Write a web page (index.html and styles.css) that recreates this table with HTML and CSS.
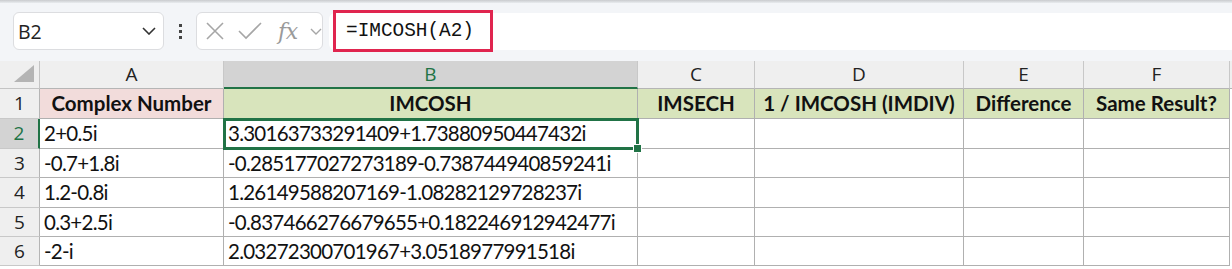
FILE: index.html
```html
<!DOCTYPE html>
<html>
<head>
<meta charset="utf-8">
<link rel="stylesheet" href="styles.css">
</head>
<body>
<div class="topline"></div>
<div class="toolbar">
  <div class="namebox">
    <span class="nb-text">B2</span>
    <svg class="chev" width="14" height="8" viewBox="0 0 14 8"><path d="M1 1 L7 7 L13 1" fill="none" stroke="#333" stroke-width="1.6"/></svg>
  </div>
  <div class="dots"><span></span><span></span><span></span></div>
  <div class="fxbox">
    <svg width="20" height="20" viewBox="0 0 20 20"><path d="M2 2 L18 18 M18 2 L2 18" stroke="#a6a6a6" stroke-width="1.6" fill="none"/></svg>
    <svg width="26" height="20" viewBox="0 0 26 20"><path d="M2 10 L9 17 L24 2" stroke="#a6a6a6" stroke-width="1.6" fill="none"/></svg>
    <span class="fx">fx</span>
    <svg width="12" height="7" viewBox="0 0 12 7"><path d="M1 1 L6 6 L11 1" fill="none" stroke="#a6a6a6" stroke-width="1.4"/></svg>
  </div>
  <div class="formulabar">
    <div class="highlight"><span class="formula">=IMCOSH(A2)</span></div>
  </div>
</div>
<div class="sheet">
  <div class="corner"><svg width="20" height="17" viewBox="0 0 20 17"><path d="M20 0 L20 17 L0 17 Z" fill="#b4b4b4"/></svg></div>
  <div class="ch">A</div>
  <div class="ch sel">B</div>
  <div class="ch">C</div>
  <div class="ch">D</div>
  <div class="ch">E</div>
  <div class="ch">F</div>
  <div class="ch tail"></div>

  <div class="rh">1</div>
  <div class="c hdr pink">Complex Number</div>
  <div class="c hdr green">IMCOSH</div>
  <div class="c hdr green">IMSECH</div>
  <div class="c hdr green">1 / IMCOSH (IMDIV)</div>
  <div class="c hdr green">Difference</div>
  <div class="c hdr green">Same Result?</div>
  <div class="c tail"></div>

  <div class="rh selr">2</div>
  <div class="c">2+0.5i</div>
  <div class="c active">3.30163733291409+1.73880950447432i<span class="handle"></span></div>
  <div class="c"></div>
  <div class="c"></div>
  <div class="c"></div>
  <div class="c"></div>
  <div class="c tail"></div>

  <div class="rh">3</div>
  <div class="c">-0.7+1.8i</div>
  <div class="c">-0.285177027273189-0.738744940859241i</div>
  <div class="c"></div>
  <div class="c"></div>
  <div class="c"></div>
  <div class="c"></div>
  <div class="c tail"></div>

  <div class="rh">4</div>
  <div class="c">1.2-0.8i</div>
  <div class="c">1.26149588207169-1.08282129728237i</div>
  <div class="c"></div>
  <div class="c"></div>
  <div class="c"></div>
  <div class="c"></div>
  <div class="c tail"></div>

  <div class="rh">5</div>
  <div class="c">0.3+2.5i</div>
  <div class="c">-0.837466276679655+0.182246912942477i</div>
  <div class="c"></div>
  <div class="c"></div>
  <div class="c"></div>
  <div class="c"></div>
  <div class="c tail"></div>

  <div class="rh">6</div>
  <div class="c">-2-i</div>
  <div class="c">2.03272300701967+3.0518977991518i</div>
  <div class="c"></div>
  <div class="c"></div>
  <div class="c"></div>
  <div class="c"></div>
  <div class="c tail"></div>
</div>
</body>
</html>
```

FILE: styles.css
```css
* { box-sizing: border-box; }
html, body { margin: 0; padding: 0; background: #ffffff; overflow: hidden; }
body { width: 1232px; height: 269px; font-family: "Open Sans", "Noto Sans", sans-serif; }

.topline { height: 3px; background: linear-gradient(#c9cbce, #e9ecef); }

.toolbar {
  height: 58px;
  background: #f3f5f8;
  display: flex;
  align-items: center;
  padding-left: 13px;
  padding-bottom: 2px;
}

.namebox {
  width: 151px;
  height: 38px;
  background: #fff;
  border: 1px solid #dcdde0;
  border-radius: 6px;
  display: flex;
  align-items: center;
  justify-content: space-between;
  padding: 0 7px 0 4px;
}
.nb-text { font-size: 19.5px; color: #222; font-family: "Open Sans", sans-serif; }

.dots {
  width: 32px;
  display: flex;
  flex-direction: column;
  align-items: center;
  gap: 3px;
}
.dots span { width: 3px; height: 3px; background: #444; display: block; }

.fxbox {
  width: 127px;
  height: 38px;
  background: #fff;
  border: 1px solid #dcdde0;
  border-radius: 6px;
  display: flex;
  align-items: center;
  padding-left: 8px;
  gap: 12px;
}
.fx {
  font-family: "DejaVu Serif", "Liberation Serif", serif;
  font-style: italic;
  font-size: 22px;
  color: #9a9a9a;
  margin-left: 3px;
  margin-right: 0;
  letter-spacing: -0.5px;
}

.formulabar {
  flex: 1;
  height: 37px;
  margin-left: 6px;
  background: #fff;
  border-radius: 6px 0 0 6px;
  display: flex;
  align-items: center;
  padding-left: 4px;
}
.highlight {
  width: 160px;
  height: 42px;
  border: 3px solid #e0254f;
  display: flex;
  align-items: center;
  padding-left: 10px;
  padding-bottom: 1px;
}
.formula {
  font-family: "Liberation Mono", "DejaVu Sans Mono", monospace;
  font-size: 19.4px;
  color: #111;
}

.sheet {
  display: grid;
  grid-template-columns: 40px 184px 414px 117px 209px 120px 146px 2px;
  grid-template-rows: 28px 30px 30px 29px 30px 29px 29px;
  background: #fff;
}

.corner {
  background: #efefef;
  border-right: 1px solid #c4c4c4;
  border-bottom: 1px solid #c4c4c4;
  display: flex;
  align-items: flex-end;
  justify-content: flex-end;
  padding: 0 5px 6px 0;
}

.ch {
  background: #efefef;
  border-right: 1px solid #c8c8c8;
  border-bottom: 1px solid #b5b5b5;
  text-align: center;
  font-size: 19px;
  line-height: 27px;
  color: #222;
  font-family: "Open Sans", sans-serif;
}
.ch.sel {
  background: #d3d3d3;
  color: #217346;
  border-bottom: 2px solid #217346;
}
.ch.tail { border-right: none; background: #efefef; }

.rh {
  background: #efefef;
  border-right: 1px solid #b5b5b5;
  border-bottom: 1px solid #c8c8c8;
  text-align: center;
  font-size: 19px;
  line-height: 29px;
  color: #222;
  font-family: "Open Sans", sans-serif;
}
.rh.selr {
  background: #d3d3d3;
  color: #217346;
  border-right: 2px solid #217346;
}

.c {
  position: relative;
  border-right: 1px solid #b0b0b0;
  border-bottom: 1px solid #b0b0b0;
  font-family: "Lato", "Open Sans", sans-serif;
  font-size: 20.5px;
  letter-spacing: -0.75px;
  line-height: 29px;
  color: #111;
  padding-left: 4px;
  white-space: nowrap;
}
.c.tail { border-right: none; border-bottom: none; }
.hdr { font-weight: bold; text-align: center; padding-left: 0; letter-spacing: 0; }
.pink { background: #f2dcdb; }
.green { background: #d8e4bc; }

.active {
  outline: 3px solid #217346;
  outline-offset: -2px;
  z-index: 2;
}
.handle {
  position: absolute;
  right: -5px;
  bottom: -5px;
  width: 9px;
  height: 9px;
  background: #217346;
  border: 1px solid #fff;
}
```
